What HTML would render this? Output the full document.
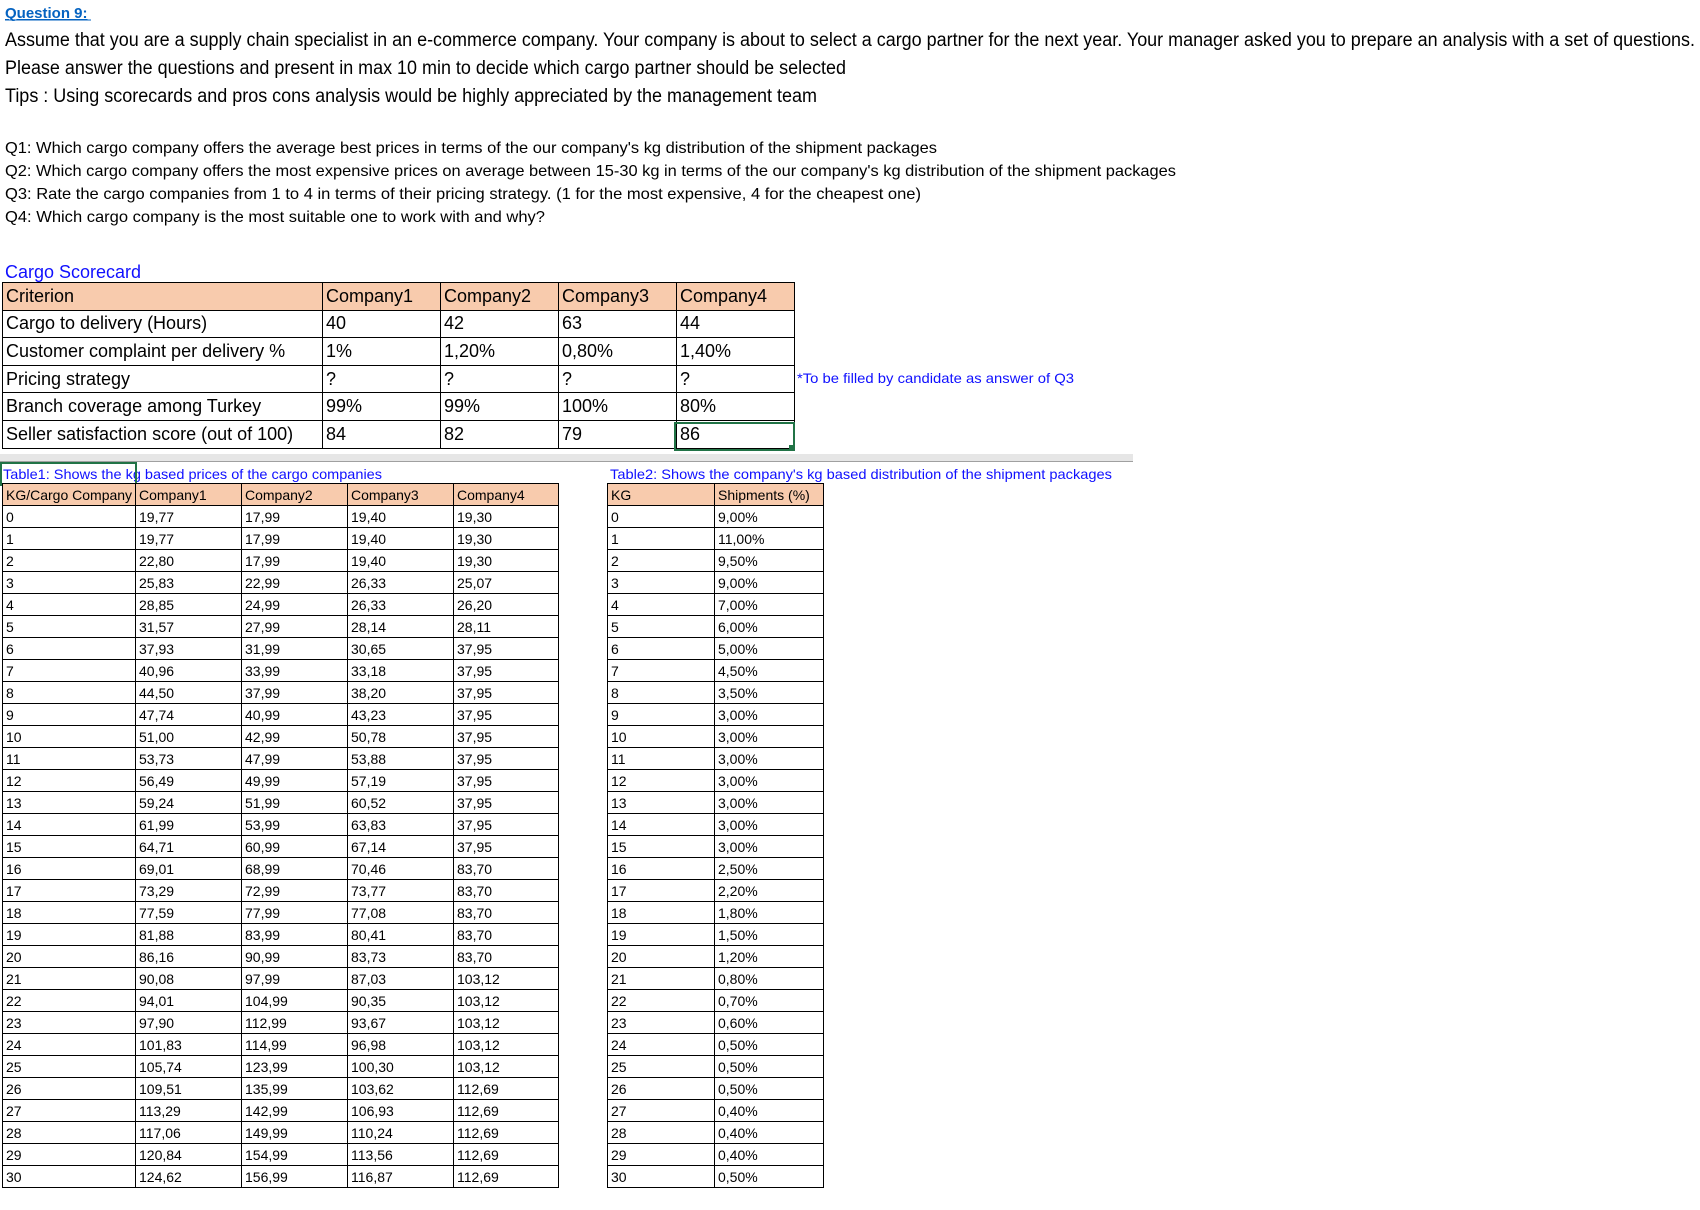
<!DOCTYPE html>
<html><head><meta charset="utf-8"><style>
body{margin:0;width:1700px;height:1210px;background:#fff;position:relative;overflow:hidden;font-family:"Liberation Sans",Arial,sans-serif}
.abs{position:absolute}
table{border-collapse:collapse;table-layout:fixed;position:absolute}
td{border:1px solid #000;padding:0 0 0 3px;white-space:nowrap;overflow:hidden;vertical-align:middle}
.sc td{height:26.6px;font-size:18px}
.t td{height:21px;font-size:14px}
.h td{background:#F8CBAD}
</style></head><body>
<svg class="abs" style="left:0;top:0" width="1700" height="500">
<g font-family="Liberation Sans, Arial, sans-serif">
<text x="5" y="18" font-size="15" font-weight="bold" fill="#0563C1" text-decoration="underline">Question 9:</text>
<line x1="5" y1="20" x2="91" y2="20" stroke="#0563C1" stroke-width="1"/>
<text x="5" y="46" font-size="19" textLength="1690" lengthAdjust="spacingAndGlyphs">Assume that you are a supply chain specialist in an e-commerce company. Your company is about to select a cargo partner for the next year. Your manager asked you to prepare an analysis with a set of questions.</text>
<text x="5" y="74" font-size="19" textLength="841" lengthAdjust="spacingAndGlyphs">Please answer the questions and present in max 10 min to decide which cargo partner should be selected</text>
<text x="5" y="102" font-size="19" textLength="812" lengthAdjust="spacingAndGlyphs">Tips : Using scorecards and pros cons analysis would be highly appreciated by the management team</text>
<text x="5" y="153" font-size="16" textLength="932" lengthAdjust="spacingAndGlyphs">Q1: Which cargo company offers the average best prices in terms of the our company's kg distribution of the shipment packages</text>
<text x="5" y="176" font-size="16" textLength="1171" lengthAdjust="spacingAndGlyphs">Q2: Which cargo company offers the most expensive prices on average between 15-30 kg in terms of the our company's kg distribution of the shipment packages</text>
<text x="5" y="199" font-size="16" textLength="916" lengthAdjust="spacingAndGlyphs">Q3: Rate the cargo companies from 1 to 4 in terms of their pricing strategy. (1 for the most expensive, 4 for the cheapest one)</text>
<text x="5" y="222" font-size="16" textLength="540" lengthAdjust="spacingAndGlyphs">Q4: Which cargo company is the most suitable one to work with and why?</text>
<text x="5" y="278" font-size="18" fill="#1010ff" textLength="136" lengthAdjust="spacingAndGlyphs">Cargo Scorecard</text>
<text x="797" y="383" font-size="14" fill="#1010ff" textLength="277" lengthAdjust="spacingAndGlyphs">*To be filled by candidate as answer of Q3</text>
<text x="3" y="479" font-size="14" fill="#1010ff" textLength="379" lengthAdjust="spacingAndGlyphs">Table1: Shows the kg based prices of the cargo companies</text>
<text x="610" y="479" font-size="14" fill="#1010ff" textLength="502" lengthAdjust="spacingAndGlyphs">Table2: Shows the company's kg based distribution of the shipment packages</text>
</g>
<rect x="0" y="454" width="1133" height="8" fill="#e6e6e6"/>
<line x1="0" y1="461.5" x2="1133" y2="461.5" stroke="#a0a0a0"/>
</svg>
<table class="sc" style="left:2px;top:282px;width:792px">
<colgroup><col style="width:320px"><col style="width:118px"><col style="width:118px"><col style="width:118px"><col style="width:118px"></colgroup>
<tr class="h"><td>Criterion</td><td>Company1</td><td>Company2</td><td>Company3</td><td>Company4</td></tr>
<tr><td>Cargo to delivery (Hours)</td><td>40</td><td>42</td><td>63</td><td>44</td></tr>
<tr><td>Customer complaint per delivery %</td><td>1%</td><td>1,20%</td><td>0,80%</td><td>1,40%</td></tr>
<tr><td>Pricing strategy</td><td>?</td><td>?</td><td>?</td><td>?</td></tr>
<tr><td>Branch coverage among Turkey</td><td>99%</td><td>99%</td><td>100%</td><td>80%</td></tr>
<tr><td>Seller satisfaction score (out of 100)</td><td>84</td><td>82</td><td>79</td><td>86</td></tr>
</table>
<div class="abs" style="left:674px;top:422px;width:117px;height:25px;border:2px solid #217346"></div>
<div class="abs" style="left:789px;top:445px;width:5px;height:5px;background:#217346"></div>
<div class="abs" style="left:0;top:462px;width:133px;height:20px;border:2px solid #217346"></div>
<table class="t" style="left:2px;top:483px;width:556px">
<colgroup><col style="width:133px"><col style="width:106px"><col style="width:106px"><col style="width:106px"><col style="width:105px"></colgroup>
<tr class="h"><td>KG/Cargo Company</td><td>Company1</td><td>Company2</td><td>Company3</td><td>Company4</td></tr>
<tr><td>0</td><td>19,77</td><td>17,99</td><td>19,40</td><td>19,30</td></tr>
<tr><td>1</td><td>19,77</td><td>17,99</td><td>19,40</td><td>19,30</td></tr>
<tr><td>2</td><td>22,80</td><td>17,99</td><td>19,40</td><td>19,30</td></tr>
<tr><td>3</td><td>25,83</td><td>22,99</td><td>26,33</td><td>25,07</td></tr>
<tr><td>4</td><td>28,85</td><td>24,99</td><td>26,33</td><td>26,20</td></tr>
<tr><td>5</td><td>31,57</td><td>27,99</td><td>28,14</td><td>28,11</td></tr>
<tr><td>6</td><td>37,93</td><td>31,99</td><td>30,65</td><td>37,95</td></tr>
<tr><td>7</td><td>40,96</td><td>33,99</td><td>33,18</td><td>37,95</td></tr>
<tr><td>8</td><td>44,50</td><td>37,99</td><td>38,20</td><td>37,95</td></tr>
<tr><td>9</td><td>47,74</td><td>40,99</td><td>43,23</td><td>37,95</td></tr>
<tr><td>10</td><td>51,00</td><td>42,99</td><td>50,78</td><td>37,95</td></tr>
<tr><td>11</td><td>53,73</td><td>47,99</td><td>53,88</td><td>37,95</td></tr>
<tr><td>12</td><td>56,49</td><td>49,99</td><td>57,19</td><td>37,95</td></tr>
<tr><td>13</td><td>59,24</td><td>51,99</td><td>60,52</td><td>37,95</td></tr>
<tr><td>14</td><td>61,99</td><td>53,99</td><td>63,83</td><td>37,95</td></tr>
<tr><td>15</td><td>64,71</td><td>60,99</td><td>67,14</td><td>37,95</td></tr>
<tr><td>16</td><td>69,01</td><td>68,99</td><td>70,46</td><td>83,70</td></tr>
<tr><td>17</td><td>73,29</td><td>72,99</td><td>73,77</td><td>83,70</td></tr>
<tr><td>18</td><td>77,59</td><td>77,99</td><td>77,08</td><td>83,70</td></tr>
<tr><td>19</td><td>81,88</td><td>83,99</td><td>80,41</td><td>83,70</td></tr>
<tr><td>20</td><td>86,16</td><td>90,99</td><td>83,73</td><td>83,70</td></tr>
<tr><td>21</td><td>90,08</td><td>97,99</td><td>87,03</td><td>103,12</td></tr>
<tr><td>22</td><td>94,01</td><td>104,99</td><td>90,35</td><td>103,12</td></tr>
<tr><td>23</td><td>97,90</td><td>112,99</td><td>93,67</td><td>103,12</td></tr>
<tr><td>24</td><td>101,83</td><td>114,99</td><td>96,98</td><td>103,12</td></tr>
<tr><td>25</td><td>105,74</td><td>123,99</td><td>100,30</td><td>103,12</td></tr>
<tr><td>26</td><td>109,51</td><td>135,99</td><td>103,62</td><td>112,69</td></tr>
<tr><td>27</td><td>113,29</td><td>142,99</td><td>106,93</td><td>112,69</td></tr>
<tr><td>28</td><td>117,06</td><td>149,99</td><td>110,24</td><td>112,69</td></tr>
<tr><td>29</td><td>120,84</td><td>154,99</td><td>113,56</td><td>112,69</td></tr>
<tr><td>30</td><td>124,62</td><td>156,99</td><td>116,87</td><td>112,69</td></tr>
</table>
<table class="t" style="left:607px;top:483px;width:216px">
<colgroup><col style="width:107px"><col style="width:109px"></colgroup>
<tr class="h"><td>KG</td><td>Shipments (%)</td></tr>
<tr><td>0</td><td>9,00%</td></tr>
<tr><td>1</td><td>11,00%</td></tr>
<tr><td>2</td><td>9,50%</td></tr>
<tr><td>3</td><td>9,00%</td></tr>
<tr><td>4</td><td>7,00%</td></tr>
<tr><td>5</td><td>6,00%</td></tr>
<tr><td>6</td><td>5,00%</td></tr>
<tr><td>7</td><td>4,50%</td></tr>
<tr><td>8</td><td>3,50%</td></tr>
<tr><td>9</td><td>3,00%</td></tr>
<tr><td>10</td><td>3,00%</td></tr>
<tr><td>11</td><td>3,00%</td></tr>
<tr><td>12</td><td>3,00%</td></tr>
<tr><td>13</td><td>3,00%</td></tr>
<tr><td>14</td><td>3,00%</td></tr>
<tr><td>15</td><td>3,00%</td></tr>
<tr><td>16</td><td>2,50%</td></tr>
<tr><td>17</td><td>2,20%</td></tr>
<tr><td>18</td><td>1,80%</td></tr>
<tr><td>19</td><td>1,50%</td></tr>
<tr><td>20</td><td>1,20%</td></tr>
<tr><td>21</td><td>0,80%</td></tr>
<tr><td>22</td><td>0,70%</td></tr>
<tr><td>23</td><td>0,60%</td></tr>
<tr><td>24</td><td>0,50%</td></tr>
<tr><td>25</td><td>0,50%</td></tr>
<tr><td>26</td><td>0,50%</td></tr>
<tr><td>27</td><td>0,40%</td></tr>
<tr><td>28</td><td>0,40%</td></tr>
<tr><td>29</td><td>0,40%</td></tr>
<tr><td>30</td><td>0,50%</td></tr>
</table>
</body></html>
